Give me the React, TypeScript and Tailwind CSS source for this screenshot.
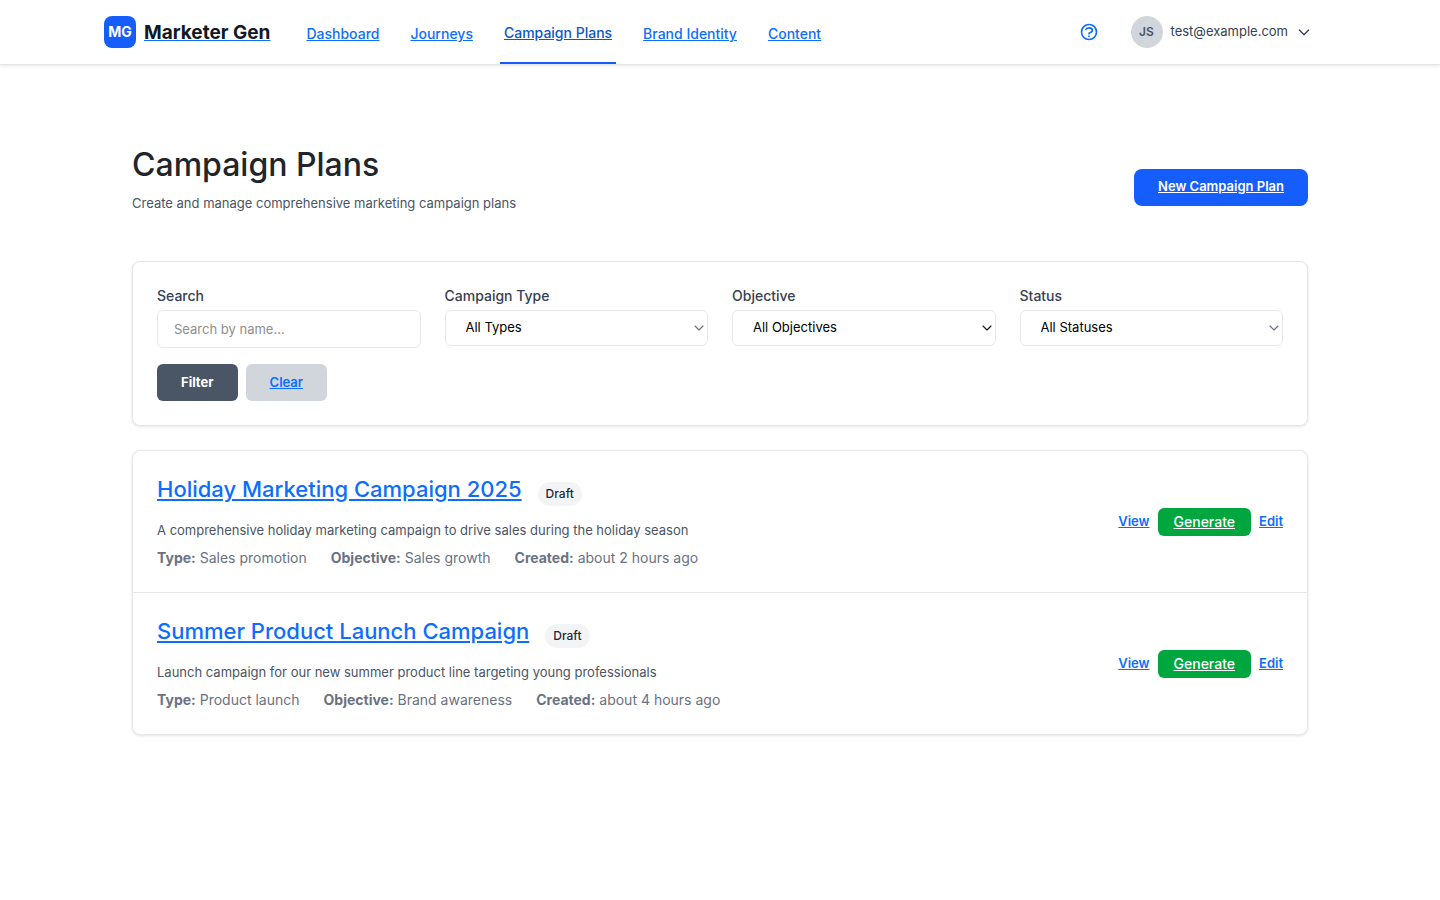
import React from "react";

const navLinks = [
  { label: "Dashboard" },
  { label: "Journeys" },
  { label: "Campaign Plans", active: true },
  { label: "Brand Identity" },
  { label: "Content" },
];

const filters = [
  { id: "campaign-type", label: "Campaign Type", all: "All Types", options: ["Product launch", "Sales promotion"], chevron: "text-gray-500" },
  { id: "objective", label: "Objective", all: "All Objectives", options: ["Brand awareness", "Sales growth"], chevron: "text-gray-900" },
  { id: "status", label: "Status", all: "All Statuses", options: ["Draft", "Completed"], chevron: "text-gray-500" },
];

const plans = [
  {
    name: "Holiday Marketing Campaign 2025",
    status: "Draft",
    description: "A comprehensive holiday marketing campaign to drive sales during the holiday season",
    type: "Sales promotion",
    objective: "Sales growth",
    created: "about 2 hours ago",
  },
  {
    name: "Summer Product Launch Campaign",
    status: "Draft",
    description: "Launch campaign for our new summer product line targeting young professionals",
    type: "Product launch",
    objective: "Brand awareness",
    created: "about 4 hours ago",
  },
];

function Chevron({ className }: { className: string }) {
  return (
    <svg viewBox="0 0 10 6" fill="none" stroke="currentColor" strokeWidth="1.1" strokeLinecap="round" strokeLinejoin="round" className={className} aria-hidden="true">
      <path d="M1 1l4 4 4-4" />
    </svg>
  );
}

function Header() {
  return (
    <header className="border-b border-gray-200 bg-white shadow-[0_1px_3px_rgba(0,0,0,0.1)]">
      <div className="mx-auto flex h-16 max-w-7xl items-center justify-between px-6">
        <div className="flex h-full items-center">
          <a href="#" className="flex items-center gap-2">
            <span className="flex size-8 items-center justify-center rounded-lg bg-[#155dfc] text-sm font-bold text-white">MG</span>
            <span className="pt-0.5 text-[19px] leading-7 font-bold text-gray-900 underline decoration-[#0d6efd]">Marketer Gen</span>
          </a>
          <nav className="ml-8 flex h-full gap-[23px]" aria-label="Main">
            {navLinks.map((link) => (
              <a
                key={link.label}
                href="#"
                aria-current={link.active ? "page" : undefined}
                className={
                  link.active
                    ? "flex items-center border-b-2 border-[#155dfc] px-1 pt-1 text-sm font-medium text-[#0a58ca] underline"
                    : "flex items-center px-1 pt-1 text-sm font-medium text-[#0d6efd] underline"
                }
              >
                {link.label}
              </a>
            ))}
          </nav>
        </div>
        <div className="flex items-center gap-8 pr-6">
          <a href="#" aria-label="Help" className="text-[#0d6efd]">
            <svg viewBox="0 0 24 24" className="size-5" fill="none" stroke="currentColor" strokeWidth="2" strokeLinecap="round" strokeLinejoin="round" aria-hidden="true">
              <path d="M8.228 9c.549-1.165 2.03-2 3.772-2 2.21 0 4 1.343 4 3 0 1.4-1.278 2.575-3.006 2.907-.542.104-.994.54-.994 1.093m0 3h.01M21 12a9 9 0 11-18 0 9 9 0 0118 0z" />
            </svg>
          </a>
          <button type="button" className="flex items-center gap-2 text-[13px] text-gray-700">
            <span className="flex size-8 items-center justify-center rounded-full bg-gray-300 text-xs font-semibold text-gray-600">JS</span>
            <span>test@example.com</span>
            <svg viewBox="0 0 24 24" className="size-4" fill="none" stroke="currentColor" strokeWidth="2" strokeLinecap="round" strokeLinejoin="round" aria-hidden="true">
              <path d="M19 9l-7 7-7-7" />
            </svg>
          </button>
        </div>
      </div>
    </header>
  );
}

function Filters() {
  return (
    <form className="mb-6 rounded-lg border border-gray-200 bg-white p-6 shadow-[0_1px_3px_rgba(0,0,0,0.1)]" onSubmit={(e) => e.preventDefault()}>
      <div className="grid grid-cols-4 items-start gap-6">
        <div className="flex flex-col gap-1">
          <label htmlFor="search" className="text-sm font-medium text-gray-700">Search</label>
          <input id="search" type="text" placeholder="Search by name..." className="h-[38px] w-full rounded-md border border-gray-200 px-4 text-[13px] text-gray-900 placeholder:text-[#8e8e8e]" />
        </div>
        {filters.map((f) => (
          <div key={f.id} className="flex flex-col gap-1">
            <label htmlFor={f.id} className="text-sm font-medium text-gray-700">{f.label}</label>
            <div className="relative">
              <select id={f.id} className="h-9 w-full appearance-none rounded-md border border-gray-200 bg-white px-5 text-[13px] text-black">
                <option>{f.all}</option>
                {f.options.map((o) => (
                  <option key={o}>{o}</option>
                ))}
              </select>
              <span className={`pointer-events-none absolute inset-y-0 right-1 flex items-center ${f.chevron}`}>
                <Chevron className="w-[10px]" />
              </span>
            </div>
          </div>
        ))}
      </div>
      <div className="mt-4 flex gap-2">
        <button type="submit" className="h-[37px] rounded-md bg-gray-600 px-6 text-[13px] font-bold text-white">Filter</button>
        <a href="#" className="flex h-[37px] items-center rounded-md bg-gray-300 px-6 text-[13px] font-semibold text-[#0d6efd] underline">Clear</a>
      </div>
    </form>
  );
}

function PlanRow({ plan }: { plan: (typeof plans)[number] }) {
  return (
    <li className="flex items-center justify-between p-6">
      <div>
        <div className="flex items-center gap-4">
          <h3 className="mb-2 text-[22px] leading-[29px] font-medium">
            <a href="#" className="text-[#0d6efd] underline">{plan.name}</a>
          </h3>
          <span className="rounded-full bg-gray-100 px-2 py-1 text-xs font-medium text-gray-800">{plan.status}</span>
        </div>
        <p className="mt-2 text-[13px] leading-5 text-gray-600">{plan.description}</p>
        <div className="mt-2 flex gap-6 text-sm text-gray-500">
          <span><strong className="font-bold">Type:</strong> {plan.type}</span>
          <span><strong className="font-bold">Objective:</strong> {plan.objective}</span>
          <span><strong className="font-bold">Created:</strong> {plan.created}</span>
        </div>
      </div>
      <div className="flex items-center gap-2 text-[13px] font-semibold text-[#0d6efd]">
        <a href="#" className="underline">View</a>
        <a href="#" className="rounded-md bg-[#00a63e] px-4 py-1 text-sm font-medium text-white underline">Generate</a>
        <a href="#" className="underline">Edit</a>
      </div>
    </li>
  );
}

export default function App() {
  return (
    <div className="min-h-screen bg-white font-['Inter','Liberation_Sans',sans-serif] text-[#212529]">
      <Header />
      <main className="mx-auto max-w-7xl px-[52px] pt-20 pb-12">
        <div className="mb-8 flex items-center justify-between">
          <div className="pb-4">
            <h1 className="text-[32px] leading-10 font-medium">Campaign Plans</h1>
            <p className="mt-2 text-[13px] leading-5 text-gray-600">Create and manage comprehensive marketing campaign plans</p>
          </div>
          <a href="#" className="flex h-[37px] items-center rounded-lg bg-[#155dfc] px-6 text-[13px] font-semibold text-white underline">New Campaign Plan</a>
        </div>
        <Filters />
        <ul className="divide-y divide-gray-200 rounded-lg border border-gray-200 bg-white shadow-[0_1px_3px_rgba(0,0,0,0.1)]">
          {plans.map((plan) => (
            <PlanRow key={plan.name} plan={plan} />
          ))}
        </ul>
      </main>
    </div>
  );
}
